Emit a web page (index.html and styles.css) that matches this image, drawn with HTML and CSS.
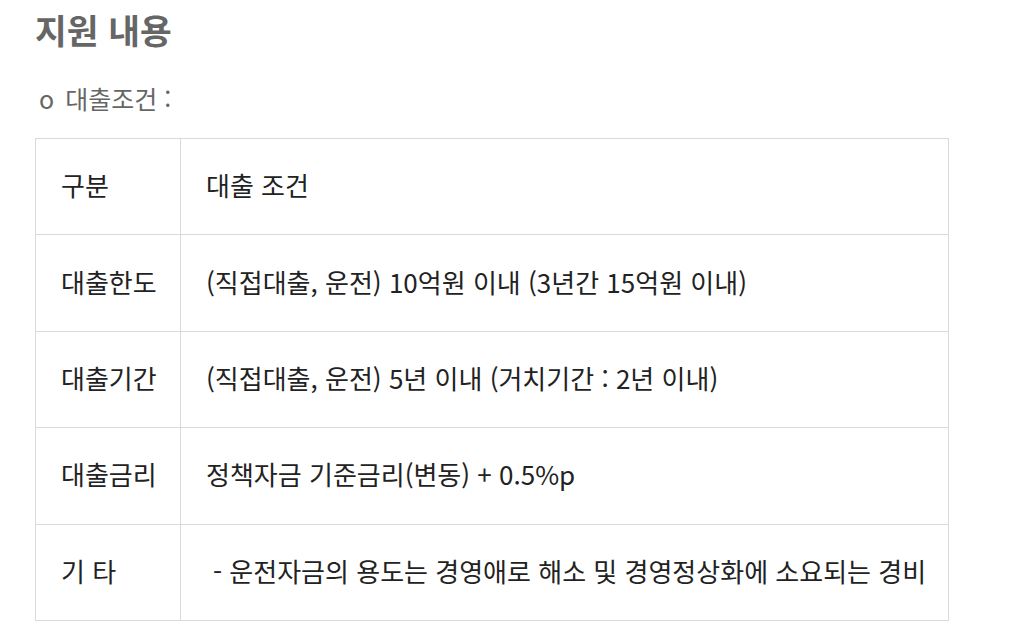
FILE: index.html
```html
<!DOCTYPE html>
<html lang="ko">
<head>
<meta charset="utf-8">
<link rel="stylesheet" href="styles.css">
</head>
<body>
<div class="page">
  <h2 class="title">지원 내용</h2>
  <p class="sub"><span class="bullet">o</span> 대출조건 :</p>
  <table class="loan">
    <tr><td class="c1">구분</td><td class="c2">대출 조건</td></tr>
    <tr><td class="c1">대출한도</td><td class="c2">(직접대출, 운전) 10억원 이내 (3년간 15억원 이내)</td></tr>
    <tr><td class="c1">대출기간</td><td class="c2">(직접대출, 운전) 5년 이내 (거치기간 : 2년 이내)</td></tr>
    <tr><td class="c1">대출금리</td><td class="c2">정책자금 기준금리(변동) + 0.5%p</td></tr>
    <tr><td class="c1">기 타</td><td class="c2 etc">- 운전자금의 용도는 경영애로 해소 및 경영정상화에 소요되는 경비</td></tr>
  </table>
</div>
</body>
</html>
```
FILE: styles.css
```css
html, body { margin: 0; padding: 0; background: #fff; }
body { font-family: "Noto Sans CJK KR", "Noto Sans", sans-serif; }
.page { padding: 6px 0 0 35px; }
.title { margin: 0; font-size: 34.5px; font-weight: 700; color: #666; line-height: 46px; }
.sub { margin: 26px 0 0 4px; font-size: 25px; color: #666; line-height: 40px; }
.bullet { font-size: 25px; margin-right: 4px; }
.loan { margin-top: 20px; border-collapse: collapse; width: 914px; }
.loan td { border: 1px solid #d9d9d9; height: 91.4px; padding: 0 0 4px 25px; font-size: 26px; color: #222; vertical-align: middle; }
.loan .c1 { width: 119px; }
.loan .etc { padding-left: 32px; }
```
